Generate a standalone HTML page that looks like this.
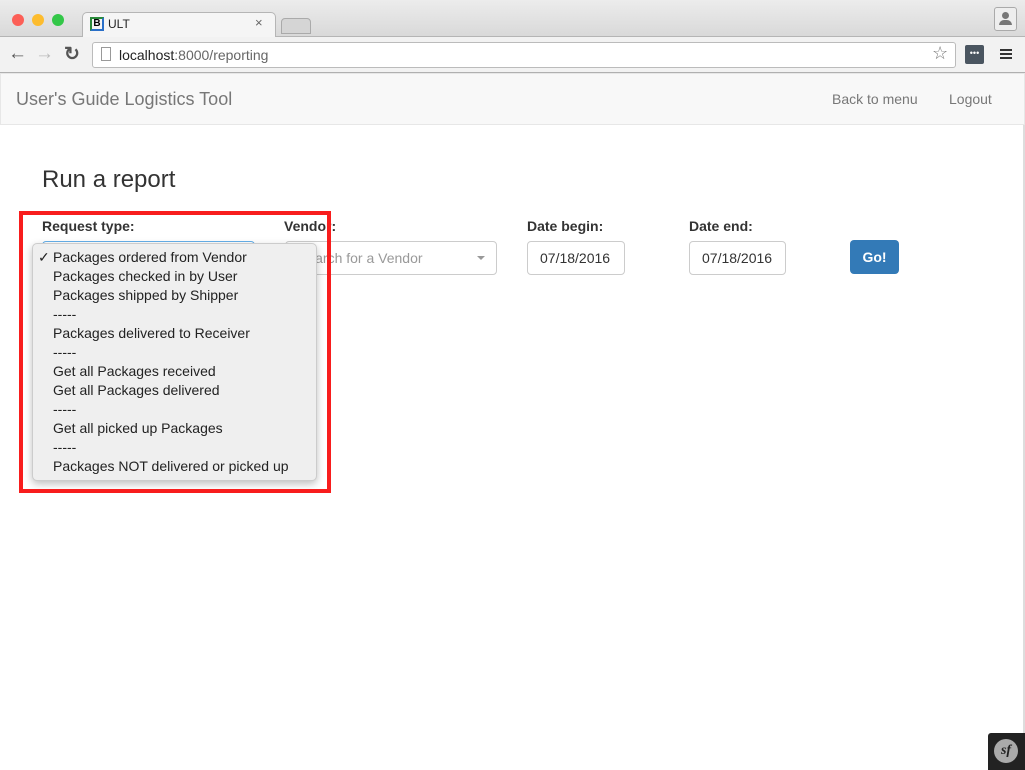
<!DOCTYPE html>
<html><head><style>
*{margin:0;padding:0;box-sizing:border-box}
body{width:1025px;height:770px;overflow:hidden;background:#fff;font-family:"Liberation Sans",sans-serif;position:relative}
.a{position:absolute}
</style></head><body>
<div class="a" style="left:0;top:0;width:1025px;height:37px;background:linear-gradient(#ececec,#d9d9d9);border-bottom:1px solid #b5b5b5"></div>
<div class="a" style="left:12px;top:14px;width:12px;height:12px;border-radius:50%;background:#fc5f57"></div>
<div class="a" style="left:32px;top:14px;width:12px;height:12px;border-radius:50%;background:#fdbc2e"></div>
<div class="a" style="left:52px;top:14px;width:12px;height:12px;border-radius:50%;background:#33c748"></div>
<div class="a" style="left:82px;top:12px;width:194px;height:27px;background:#f5f5f5;border:1px solid #b5b5b5;border-bottom:none;border-radius:5px 5px 0 0"></div>
<div class="a" style="left:90px;top:17px;width:14px;height:14px;border:2px solid #2a8a3a;border-right-color:#2a6fc8;border-bottom-color:#2a6fc8;font-size:10px;font-weight:bold;line-height:10px;text-align:center">B</div>
<div class="a" style="left:108px;top:17px;font-size:12px;color:#222">ULT</div>
<div class="a" style="left:255px;top:15px;font-size:13px;color:#666">×</div>
<div class="a" style="left:281px;top:18px;width:30px;height:16px;background:#d5d5d5;border:1px solid #aaa;border-radius:4px 4px 0 0"></div>
<div class="a" style="left:994px;top:7px;width:23px;height:24px;border:1px solid #aaa;border-radius:3px;background:#eee"></div>
<div class="a" style="left:1002px;top:12px;width:7px;height:7px;border-radius:50%;background:#777"></div>
<div class="a" style="left:999px;top:20px;width:13px;height:5px;border-radius:5px 5px 0 0;background:#777"></div>
<div class="a" style="left:0;top:37px;width:1025px;height:36px;background:#f2f2f2;border-bottom:1px solid #b0b0b0"></div>
<div class="a" style="left:8px;top:43px;font-size:19px;color:#555;font-weight:bold">←</div>
<div class="a" style="left:35px;top:43px;font-size:19px;color:#bbb;font-weight:bold">→</div>
<div class="a" style="left:64px;top:43px;font-size:19px;color:#555;font-weight:bold">↻</div>
<div class="a" style="left:92px;top:42px;width:864px;height:26px;background:#fff;border:1px solid #bbb;border-radius:3px"></div>
<div class="a" style="left:101px;top:47px;width:10px;height:14px;border:1px solid #999"></div>
<div class="a" style="left:119px;top:47px;font-size:14px;color:#222">localhost<span style="color:#666">:8000/reporting</span></div>
<div class="a" style="left:932px;top:43px;font-size:18px;color:#777">☆</div>
<div class="a" style="left:965px;top:45px;width:19px;height:19px;background:#4a5560;border-radius:2px;color:#fff;font-size:9px;text-align:center;line-height:17px">•••</div>
<div class="a" style="left:1000px;top:49px;width:12px;height:2px;background:#333;box-shadow:0 4px #333,0 8px #333"></div>
<div class="a" style="left:0;top:73px;width:1025px;height:52px;background:#f8f8f8;border:1px solid #e7e7e7"></div>
<div class="a" style="left:16px;top:89px;font-size:18px;color:#777">User's Guide Logistics Tool</div>
<div class="a" style="left:832px;top:91px;font-size:14px;color:#777">Back to menu</div>
<div class="a" style="left:949px;top:91px;font-size:14px;color:#777">Logout</div>
<div class="a" style="left:1023px;top:125px;width:2px;height:645px;background:#ddd"></div>
<div class="a" style="left:42px;top:166px;font-size:24px;color:#333">Run a report</div>
<div class="a" style="left:42px;top:218px;font-size:14px;font-weight:bold;color:#333">Request type:</div>
<div class="a" style="left:284px;top:218px;font-size:14px;font-weight:bold;color:#333">Vendor:</div>
<div class="a" style="left:527px;top:218px;font-size:14px;font-weight:bold;color:#333">Date begin:</div>
<div class="a" style="left:689px;top:218px;font-size:14px;font-weight:bold;color:#333">Date end:</div>
<div class="a" style="left:42px;top:241px;width:213px;height:34px;border:1px solid #66afe9;border-radius:4px"></div>
<div class="a" style="left:285px;top:241px;width:212px;height:34px;border:1px solid #ccc;border-radius:4px;font-size:14px;color:#999;padding:8px 12px">Search for a Vendor</div>
<div class="a" style="left:477px;top:256px;border:4px solid transparent;border-top-color:#999"></div>
<div class="a" style="left:527px;top:241px;width:98px;height:34px;border:1px solid #ccc;border-radius:4px;font-size:14px;color:#333;padding:8px 12px">07/18/2016</div>
<div class="a" style="left:689px;top:241px;width:97px;height:34px;border:1px solid #ccc;border-radius:4px;font-size:14px;color:#333;padding:8px 12px">07/18/2016</div>
<div class="a" style="left:850px;top:240px;width:49px;height:34px;background:#337ab7;border-radius:4px;font-size:14px;color:#fff;font-weight:bold;text-align:center;line-height:34px">Go!</div>
<div class="a" style="left:32px;top:243px;width:285px;height:238px;background:#efefef;border:1px solid #ccc;border-radius:5px;box-shadow:0 3px 8px rgba(0,0,0,.25);font-size:14px;color:#222;line-height:19px;padding-top:4px">
<div style="position:absolute;left:5px;top:4px">✓</div>
<div style="padding-left:20px">Packages ordered from Vendor<br>Packages checked in by User<br>Packages shipped by Shipper<br>-----<br>Packages delivered to Receiver<br>-----<br>Get all Packages received<br>Get all Packages delivered<br>-----<br>Get all picked up Packages<br>-----<br>Packages NOT delivered or picked up</div>
</div>
<div class="a" style="left:19px;top:211px;width:312px;height:282px;border:4px solid #f81d1d"></div>
<div class="a" style="left:988px;top:733px;width:37px;height:37px;background:#222;border-radius:3px 0 0 0"></div>
<div class="a" style="left:994px;top:739px;width:24px;height:24px;border-radius:50%;background:#aaa;color:#222;font-family:'Liberation Serif',serif;font-style:italic;font-weight:bold;font-size:14px;text-align:center;line-height:24px">sf</div>
</body></html>
